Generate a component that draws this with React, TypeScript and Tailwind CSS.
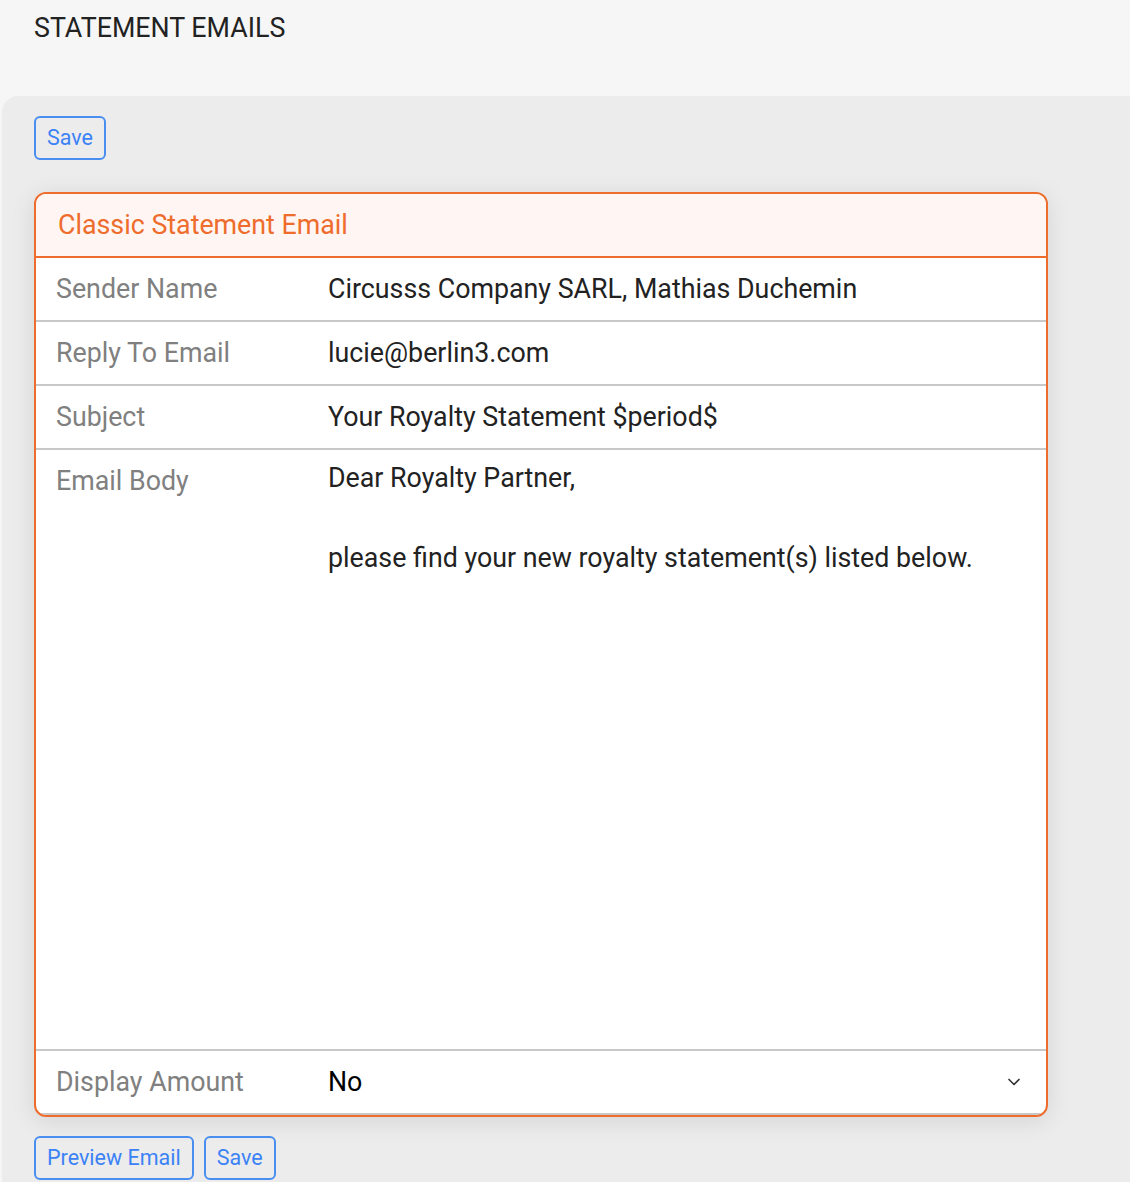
import React, { useState } from 'react';
import { ChevronDown } from 'lucide-react';

interface FieldRow {
  label: string;
  value: string;
}

const rows: FieldRow[] = [
  { label: 'Sender Name', value: 'Circusss Company SARL, Mathias Duchemin' },
  { label: 'Reply To Email', value: 'lucie@berlin3.com' },
  { label: 'Subject', value: 'Your Royalty Statement $period$' },
];

function OutlineButton({ children }: { children: React.ReactNode }) {
  return (
    <button
      type="button"
      className="h-[44px] px-[11px] border-2 border-[#4a8ef0] rounded-[6px] text-[21.5px] leading-none text-[#3b82f6] bg-transparent"
    >
      {children}
    </button>
  );
}

export default function App() {
  const [body, setBody] = useState(
    'Dear Royalty Partner,\n\nplease find your new royalty statement(s) listed below.'
  );
  const [displayAmount, setDisplayAmount] = useState('No');

  return (
    <div className="min-h-[1182px] bg-[#f6f6f6] font-['Roboto',sans-serif] flex flex-col">
      <div className="h-[96px] px-[34px] pt-[11px]">
        <h1 className="text-[26.8px] leading-[34px] text-[#222222] font-normal">STATEMENT EMAILS</h1>
      </div>

      <div className="flex-1 ml-[2px] bg-[#ececec] rounded-tl-[16px] pl-[32px] pt-[20px] pb-[2px]">
        <OutlineButton>Save</OutlineButton>

        <div className="mt-[32px] w-[1014px] border-2 border-[#ee6c2c] rounded-[12px] overflow-hidden bg-white shadow-[0_4px_24px_rgba(0,0,0,0.10)]">
          <div className="h-[64px] bg-[#fff5f2] border-b-2 border-[#ee6c2c] flex items-center px-[22px]">
            <h2 className="text-[26.8px] text-[#ee6c2c] font-normal">Classic Statement Email</h2>
          </div>

          {rows.map((row) => (
            <div key={row.label} className="h-[64px] border-b-2 border-[#c8c8c8] flex items-center">
              <div className="w-[292px] pl-[20px] text-[26.8px] text-[#808080]">{row.label}</div>
              <div className="flex-1 text-[26.8px] text-[#222222]">{row.value}</div>
            </div>
          ))}

          <div className="h-[601px] border-b-2 border-[#c8c8c8] flex">
            <div className="w-[292px] pl-[20px] pt-[11px] text-[26.8px] leading-[40px] text-[#808080]">Email Body</div>
            <textarea
              value={body}
              onChange={(e) => setBody(e.target.value)}
              className="flex-1 pt-[8px] pr-[20px] text-[26.8px] leading-[40px] text-[#222222] resize-none outline-none bg-transparent font-['Roboto',sans-serif]"
            />
          </div>

          <div className="h-[64px] border-b-2 border-[#c8c8c8] flex items-center relative">
            <div className="w-[292px] pl-[20px] text-[26.8px] text-[#808080]">Display Amount</div>
            <select
              value={displayAmount}
              onChange={(e) => setDisplayAmount(e.target.value)}
              className="flex-1 h-full appearance-none bg-transparent text-[26.8px] text-black outline-none font-['Roboto',sans-serif]"
            >
              <option value="No">No</option>
              <option value="Yes">Yes</option>
            </select>
            <ChevronDown className="absolute right-[22px] top-[21px] w-[20px] h-[20px] text-[#333333] pointer-events-none" strokeWidth={2} />
          </div>
        </div>

        <div className="mt-[19px] flex gap-[10px]">
          <OutlineButton>Preview Email</OutlineButton>
          <OutlineButton>Save</OutlineButton>
        </div>
      </div>
    </div>
  );
}
